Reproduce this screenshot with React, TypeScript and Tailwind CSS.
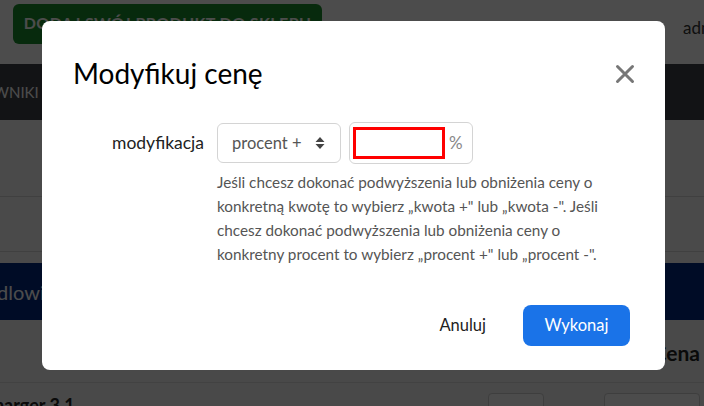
import React from "react";

const App = () => {
  return (
    <div className="relative w-[704px] h-[406px] overflow-hidden bg-white font-['Lato',sans-serif]">
      {/* page behind the dialog */}
      <div className="flex flex-col">
        <div className="h-16 flex items-start justify-between pl-[13px] pt-[4px]">
          <button className="h-10 w-[309px] rounded-md bg-[#198d2c] text-[#fff] font-bold text-[16px] tracking-wide pb-[2px]">
            DODAJ SWÓJ PRODUKT DO SKLEPU
          </button>
          <span className="text-[#333] text-[17px] mt-[11px] w-[21px] overflow-visible whitespace-nowrap">admin</span>
        </div>
        <div className="h-14 bg-[#3d4046] flex items-center text-white text-[15px] overflow-hidden whitespace-nowrap">
          <span className="ml-[-66px]">UŻYTKOWNIKI</span>
        </div>
        <div className="h-[77px] border-b border-[#d7d7d7] bg-[#f8f8f8]" />
        <div className="h-[55px] border-b border-[#d7d7d7] bg-[#f8f8f8]" />
        <div className="h-[11px] bg-[#f8f8f8]" />
        <div className="h-[57px] bg-[#002b80] flex items-center text-white text-[20px] overflow-hidden whitespace-nowrap">
          <span className="ml-[-39px]">Handlowiec</span>
        </div>
        <div className="h-[63px] bg-[#f3f3f3] border-b border-[#dcdcdc] flex items-end justify-end pb-[14px] pr-[4px]">
          <span className="font-bold text-[21px] text-[#222]">Cena</span>
        </div>
        <div className="flex items-start pt-[8px] bg-[#f3f3f3] whitespace-nowrap">
          <span className="font-bold text-lg text-[#222] ml-[-18px]">Charger 3.1</span>
          <div className="ml-[413px] mt-[2px] w-[56px] h-10 rounded border border-[#cfcfcf] bg-white shrink-0" />
          <div className="ml-[60px] mt-[2px] w-[96px] h-10 rounded border border-[#cfcfcf] bg-white shrink-0" />
        </div>
      </div>

      {/* overlay */}
      <div className="absolute inset-0 bg-black/70" />

      {/* dialog */}
      <div className="absolute left-[42px] top-[21px] w-[623px] h-[349px] bg-white rounded-lg flex flex-col">
        <div className="flex items-center justify-between pl-[31px] pr-[30px] pt-[32px]">
          <h2 className="text-[28px] leading-10 text-black">Modyfikuj cenę</h2>
          <svg width="20" height="20" viewBox="0 0 20 20" className="mt-[2px]">
            <path d="M2.5 2.5 L17.5 17.5 M17.5 2.5 L2.5 17.5" stroke="#777" strokeWidth="3" strokeLinecap="round" />
          </svg>
        </div>

        <div className="flex pt-[30px]">
          <div className="w-[175px] pr-[13px] pt-[7px] text-right text-[17.5px] text-[#222]">modyfikacja</div>
          <div className="flex flex-col">
            <div className="flex gap-[8px]">
              <div className="w-[124px] h-10 rounded-md border border-[#d4d4d4] flex items-center justify-between pl-[14px] pr-[15px] text-[16.5px] text-[#555]">
                <span>procent +</span>
                <svg width="10" height="14" viewBox="0 0 10 14">
                  <path d="M5 1 L9.5 6 H0.5 Z M5 13 L9.5 8 H0.5 Z" fill="#444" />
                </svg>
              </div>
              <div className="w-[124px] h-[42px] -mt-[1px] rounded-md border border-[#d4d4d4] flex items-center pl-[3px] gap-[4px]">
                <div className="w-[92px] h-[32px] border-[3px] border-[#ff0000]" />
                <span className="text-[17px] text-[#888]">%</span>
              </div>
            </div>
            <p className="mt-[6px] w-[410px] text-[15.3px] leading-6 text-[#555]">
              Jeśli chcesz dokonać podwyższenia lub obniżenia ceny o konkretną kwotę to wybierz „kwota +" lub „kwota -". Jeśli chcesz dokonać podwyższenia lub obniżenia ceny o konkretny procent to wybierz „procent +" lub „procent -".
            </p>
          </div>
        </div>

        <div className="mt-auto mb-[24px] flex items-center justify-end gap-[37px] pr-[35px]">
          <button className="text-[16.5px] text-[#222]">Anuluj</button>
          <button className="w-[107px] h-[41px] rounded-lg bg-[#1a73e8] text-white text-[16.5px]">Wykonaj</button>
        </div>
      </div>
    </div>
  );
};

export default App;
